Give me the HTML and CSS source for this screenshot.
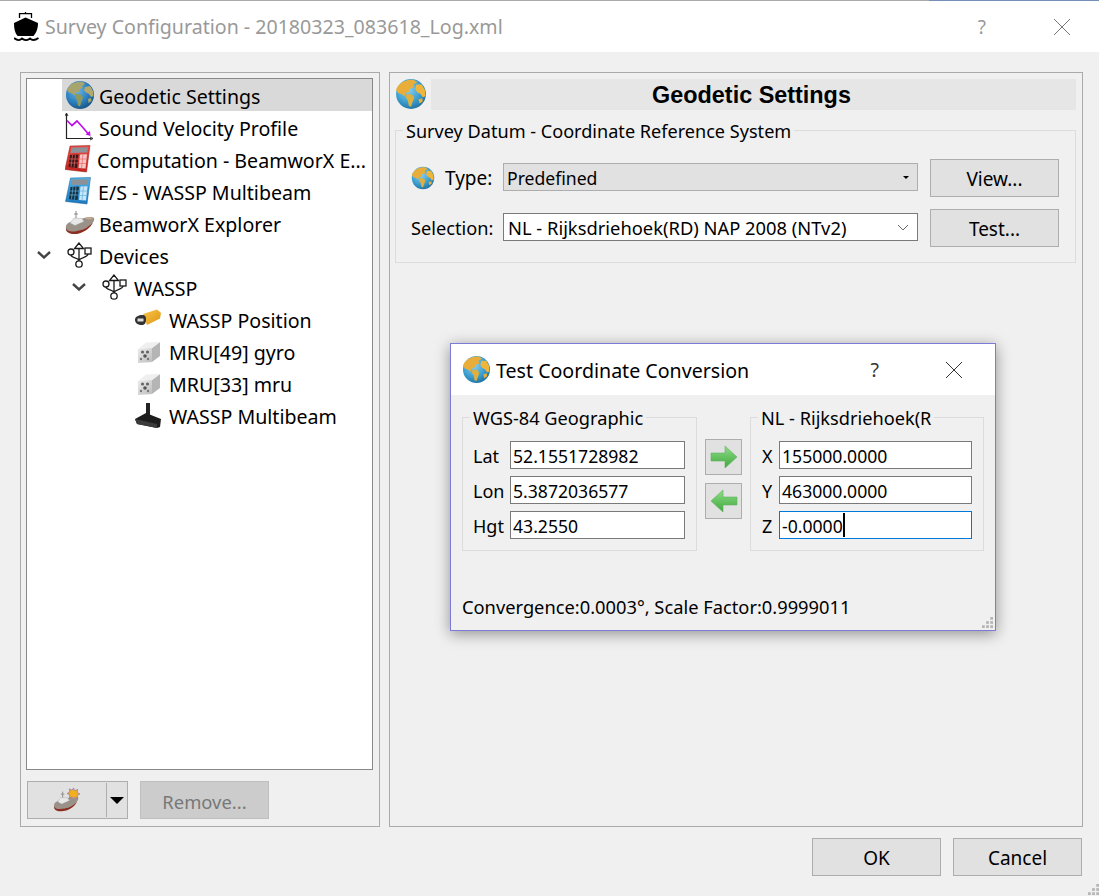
FILE: index.html
```html
<!DOCTYPE html>
<html lang="en">
<head>
<meta charset="utf-8">
<title>Survey Configuration</title>
<link rel="stylesheet" href="styles.css">
</head>
<body>
<svg class="defs" width="0" height="0" aria-hidden="true">
  <defs>
    <radialGradient id="sea" cx="40%" cy="35%" r="70%"><stop offset="0" stop-color="#6fb4e6"/><stop offset=".6" stop-color="#2b7fc0"/><stop offset="1" stop-color="#17527f"/></radialGradient>
    <radialGradient id="seaB" cx="40%" cy="35%" r="70%"><stop offset="0" stop-color="#8fd0ee"/><stop offset=".6" stop-color="#3d9fd0"/><stop offset="1" stop-color="#1d6f9f"/></radialGradient>
    <linearGradient id="red" x1="0" y1="0" x2="0" y2="1"><stop offset="0" stop-color="#f04a45"/><stop offset="1" stop-color="#c4221e"/></linearGradient>
    <linearGradient id="blue" x1="0" y1="0" x2="0" y2="1"><stop offset="0" stop-color="#4fb4ec"/><stop offset="1" stop-color="#1c78bd"/></linearGradient>
    <linearGradient id="gold" x1="0" y1="0" x2="1" y2="1"><stop offset="0" stop-color="#fbc64a"/><stop offset="1" stop-color="#dd9410"/></linearGradient>
    <linearGradient id="arrow" x1="0" y1="0" x2="0" y2="1"><stop offset="0" stop-color="#8fdc86"/><stop offset="1" stop-color="#3fa83f"/></linearGradient>
    <linearGradient id="metal" x1="0" y1="0" x2="1" y2="1"><stop offset="0" stop-color="#ececec"/><stop offset="1" stop-color="#bdbdbd"/></linearGradient>

    <symbol id="i-globe" viewBox="0 0 30 30">
      <circle cx="15" cy="15" r="14" fill="url(#sea)"/>
      <path d="M8 3.500c3-1.500 7-2.200 10-1.500l2 2-3 2 1 2-3 1-1 3-3 .5-1 3-3-2-3-1-2-2c1-3 3-6 6-7.500z" fill="#a7a56d"/>
      <path d="M11 14l5 .5 2 3-1.500 4-1.500 5-2-1-1-5-2-3z" fill="#8c9a5e"/>
      <path d="M20 7l5-1 3 5 .5 5-2.500 1-2-3-3-1.500-2-2z" fill="#b3a96d"/>
      <path d="M23 19l3-1 .5 3-3 2z" fill="#a7a56d"/>
    </symbol>
    <symbol id="i-globe-y" viewBox="0 0 30 30">
      <circle cx="15" cy="15" r="14" fill="url(#seaB)"/>
      <path d="M7 4c3-2 8-3 11-2l3 2-4 2 1 3-4 1-1 3-3 1-1 3-3-2-3-1-2-3c1-3 3-5 6-7z" fill="#e9ae3a"/>
      <path d="M11 15l5 .5 2 3-1.500 4-1.500 4.500-2-1-1-5-2-3z" fill="#ddb040"/>
      <path d="M20 6l5 0 3 5 .5 6-2.500 1-2-3-3-1.500-2-3z" fill="#eeb53c"/>
      <path d="M22 20l3.500-1 .5 3-3 2z" fill="#e9ae3a"/>
    </symbol>
    <symbol id="i-sv" viewBox="0 0 30 30">
      <path d="M1.500 2v24.500h25" fill="none" stroke="#222" stroke-width="1.200"/>
      <path d="M0 4l1.500-3 1.500 3M25 25l3 1.500-3 1.500" fill="none" stroke="#222" stroke-width=".9"/>
      <path d="M2 8.500l5 5 5-4.500 5 5.500 6 7" fill="none" stroke="#c010e8" stroke-width="1.700"/>
      <path d="M20.500 22.500l4.500-3.500 .5 5z" fill="#c010e8"/>
    </symbol>
    <symbol id="i-calc-r" viewBox="0 0 28 30">
      <path d="M5 2l20-.5-3.500 26.500L0 25.500z" fill="url(#red)" stroke="#8f1a18" stroke-width=".5"/>
      <path d="M6.500 3.500l16.500-.3-.8 5.300L5.500 9z" fill="#8d9298"/>
      <path d="M5 11l8.500-.5-1.500 13.500-8.500-1z" fill="#3a1817"/>
      <path d="M15 10.500l7-.3-1.500 14.300-7-.5z" fill="#f3c8c6"/>
      <path d="M4.500 15h9M4 19h9M7.500 11l-1.500 12M10.500 11l-1.500 12.500M14.500 15h7M14 19.500h7M18 10.500l-1.500 14" stroke="#e66" stroke-width=".7"/>
    </symbol>
    <symbol id="i-calc-b" viewBox="0 0 28 30">
      <path d="M5 2l20-.5-3.500 26.500L0 25.500z" fill="url(#blue)" stroke="#135f96" stroke-width=".5"/>
      <path d="M6.500 3.500l16.500-.3-.8 5.300L5.500 9z" fill="#8d9298"/>
      <path d="M5 11l8.500-.5-1.500 13.500-8.500-1z" fill="#16303f"/>
      <path d="M15 10.500l7-.3-1.500 14.300-7-.5z" fill="#c9e6f6"/>
      <path d="M4.500 15h9M4 19h9M7.500 11l-1.500 12M10.500 11l-1.500 12.500M14.500 15h7M14 19.500h7M18 10.500l-1.500 14" stroke="#5cb4e6" stroke-width=".7"/>
    </symbol>
    <symbol id="i-ship" viewBox="0 0 30 26">
      <path d="M11 1v9M9 4h4" stroke="#888" stroke-width="1"/>
      <path d="M1 16c1-4 9-6 15-7 5-2 11-3 13-1 1 3-2 6-6 9-5 3-11 5-16 5-4 0-7-2-6-6z" fill="#9a9288"/>
      <path d="M1 18c1 4 8 4 13 2.500 5-1 10-4 14-8-3 6-8 9-14 11-6 1.500-14 0-13-5.500z" fill="#8c2f22"/>
      <path d="M5 13l4-5 8 .5 2 3-9 4z" fill="#e8e8e8" stroke="#999" stroke-width=".4"/>
      <path d="M20 8c3-1 6-1 8 0-2 2-5 2-8 0z" fill="#c9a98d"/>
    </symbol>
    <symbol id="i-usb" viewBox="0 0 30 30">
      <g fill="none" stroke="#1a1a1a" stroke-width="1.300">
        <path d="M14 3l-4.500 5.500h9zM14 8.500v12.500M6 15c0 3 5 2 8 5M23 14c0 3-6 3-9 6"/>
        <circle cx="6" cy="12" r="3"/>
        <rect x="20" y="8" width="6" height="6"/>
        <circle cx="14" cy="24" r="3.200"/>
      </g>
    </symbol>
    <symbol id="i-chev" viewBox="0 0 14 8">
      <path d="M1 1l6 5.500 6-5.500" fill="none" stroke="#444" stroke-width="2.400"/>
    </symbol>
    <symbol id="i-gps" viewBox="0 0 30 30">
      <path d="M8 10l14-4.500 4 3.500-1 5.500L12 21z" fill="url(#gold)"/>
      <path d="M0 15.500c0-3 4-4.500 7-4.500 3.500 0 4 2 4 4.500 0 3-1 5.500-4 5.500-4 0-7-1.500-7-5.500z" fill="#333"/>
      <path d="M2.500 14.500h6v3h-6z" fill="#dcdcdc"/>
    </symbol>
    <symbol id="i-mru" viewBox="0 0 30 30">
      <path d="M17 12l8-6v14l-8 6z" fill="#b5b5b5"/>
      <path d="M3 13l8-6.500 14-.5-8 6z" fill="#efefef"/>
      <path d="M3 13l14-1v14l-14 1z" fill="url(#metal)"/>
      <circle cx="7.500" cy="16" r="1.600" fill="#666"/><circle cx="12.500" cy="16" r="1.600" fill="#666"/><circle cx="10" cy="20" r="1.800" fill="#555"/><circle cx="6" cy="23" r="1.200" fill="#777"/><circle cx="13" cy="23" r="1.200" fill="#777"/>
    </symbol>
    <symbol id="i-beam" viewBox="0 0 30 30">
      <path d="M11 3h4v12h-4z" fill="#222"/>
      <path d="M0 19l11-6 15 6-1 8-3 1L2 24z" fill="#1d1d1d"/>
      <path d="M0 19l22 5v4L2 24z" fill="#3b3b3b"/>
    </symbol>
    <symbol id="i-grip" viewBox="0 0 12 12">
      <g fill="#b5b5b5"><rect x="9" y="0" width="3" height="3"/><rect x="4.500" y="4.500" width="3" height="3"/><rect x="9" y="4.500" width="3" height="3"/><rect x="0" y="9" width="3" height="3"/><rect x="4.500" y="9" width="3" height="3"/><rect x="9" y="9" width="3" height="3"/></g>
    </symbol>
  </defs>
</svg>

<div class="window">
  <header class="titlebar">
    <svg class="title-icon" viewBox="0 0 25 29" width="25" height="29">
      <path d="M5.500 6V1.700h12V6M11.500 0v2" fill="none" stroke="#000" stroke-width="1.300"/>
      <path d="M11.500 5.500L24 11c0 6-2 10-4.500 13h-16C1 21 0 17 0 11z" fill="#000"/>
      <path d="M0 26c3 2.500 6 2.500 8 .5 2.500 2 5.500 2 8 0 2 2 5 2 8.500-.5" fill="none" stroke="#000" stroke-width="1.800"/>
    </svg>
    <span class="title-text">Survey Configuration - 20180323_083618_Log.xml</span>
    <span class="title-help">?</span>
    <svg class="title-close" viewBox="0 0 16 16" width="16" height="16"><path d="M0 0l16 16M16 0L0 16" stroke="#777" stroke-width="1" fill="none"/></svg>
  </header>

  <main class="content">
    <section class="left-panel">
      <div class="tree">
        <div class="row"><span class="twig"></span><div class="item selected"><svg class="ic w30"><use href="#i-globe"/></svg><span>Geodetic Settings</span></div></div>
        <div class="row"><span class="twig"></span><div class="item"><svg class="ic w30"><use href="#i-sv"/></svg><span>Sound Velocity Profile</span></div></div>
        <div class="row"><span class="twig"></span><div class="item"><svg class="ic w28"><use href="#i-calc-r"/></svg><span>Computation - BeamworX E...</span></div></div>
        <div class="row"><span class="twig"></span><div class="item"><svg class="ic w29"><use href="#i-calc-b"/></svg><span>E/S - WASSP Multibeam</span></div></div>
        <div class="row"><span class="twig"></span><div class="item"><svg class="ic w30"><use href="#i-ship"/></svg><span>BeamworX Explorer</span></div></div>
        <div class="row"><span class="twig"><svg class="chev"><use href="#i-chev"/></svg></span><div class="item"><svg class="ic w30"><use href="#i-usb"/></svg><span>Devices</span></div></div>
        <div class="row lvl1"><span class="twig"><svg class="chev"><use href="#i-chev"/></svg></span><div class="item"><svg class="ic w30"><use href="#i-usb"/></svg><span>WASSP</span></div></div>
        <div class="row lvl2"><span class="twig"></span><div class="item"><svg class="ic w30"><use href="#i-gps"/></svg><span>WASSP Position</span></div></div>
        <div class="row lvl2"><span class="twig"></span><div class="item"><svg class="ic w30"><use href="#i-mru"/></svg><span>MRU[49] gyro</span></div></div>
        <div class="row lvl2"><span class="twig"></span><div class="item"><svg class="ic w30"><use href="#i-mru"/></svg><span>MRU[33] mru</span></div></div>
        <div class="row lvl2"><span class="twig"></span><div class="item"><svg class="ic w30"><use href="#i-beam"/></svg><span>WASSP Multibeam</span></div></div>
      </div>
      <div class="tree-actions">
        <div class="split">
          <button class="split-main" type="button" aria-label="Add">
            <svg class="add-ship" viewBox="0 0 30 28" width="28" height="26"><use href="#i-ship" width="28" height="24" y="4"/>
              <path d="M22 1l1.500 3 3-1.500-.5 3.500 3 1.500-3 1.500.5 3.500-3-1.500L22 13l-1.500-2.500-3 1.500.5-3.500-3-1.500 3-1.500-.5-3.500 3 1.500z" fill="#f2b01e" stroke="#8f6fb0" stroke-width=".7"/>
            </svg>
          </button>
          <button class="split-arrow" type="button" aria-label="More"><i class="caret"></i></button>
        </div>
        <button class="btn btn-disabled" type="button" disabled>Remove...</button>
      </div>
    </section>

    <section class="right-panel">
      <div class="panel-head">
        <svg class="head-globe"><use href="#i-globe-y"/></svg>
        <h1 class="head-bar">Geodetic Settings</h1>
      </div>
      <fieldset class="group datum">
        <legend>Survey Datum - Coordinate Reference System</legend>
        <div class="form-row">
          <svg class="type-globe"><use href="#i-globe-y"/></svg>
          <label class="lbl-type">Type:</label>
          <div class="combo combo-flat"><span class="val-type">Predefined</span><i class="caret small"></i></div>
          <button class="btn btn-side" type="button">View...</button>
        </div>
        <div class="form-row">
          <label class="lbl-sel">Selection:</label>
          <div class="combo combo-edit"><span class="val-sel">NL - Rijksdriehoek(RD) NAP 2008 (NTv2)</span>
            <svg class="combo-chev" viewBox="0 0 12 7" width="12" height="7"><path d="M1 1l5 5 5-5" fill="none" stroke="#666" stroke-width="1"/></svg>
          </div>
          <button class="btn btn-side" type="button">Test...</button>
        </div>
      </fieldset>
    </section>
  </main>

  <footer class="footer">
    <button class="btn" type="button">OK</button>
    <button class="btn" type="button">Cancel</button>
  </footer>
  <svg class="grip grip-main"><use href="#i-grip"/></svg>

  <div class="dialog">
    <div class="dlg-title">
      <svg class="dlg-globe"><use href="#i-globe-y"/></svg>
      <span class="dlg-name">Test Coordinate Conversion</span>
      <span class="dlg-help">?</span>
      <svg class="dlg-close" viewBox="0 0 16 16" width="16" height="16"><path d="M0 0l16 16M16 0L0 16" stroke="#333" stroke-width="1" fill="none"/></svg>
    </div>
    <div class="dlg-body">
      <div class="dlg-groups">
        <fieldset class="group coord coord-left">
          <legend>WGS-84 Geographic</legend>
          <div class="field"><label>Lat</label><div class="input">52.1551728982</div></div>
          <div class="field"><label>Lon</label><div class="input">5.3872036577</div></div>
          <div class="field"><label>Hgt</label><div class="input">43.2550</div></div>
        </fieldset>
        <div class="arrows">
          <button class="arrow-btn" type="button" aria-label="Convert right"><svg viewBox="0 0 28 24" width="28" height="24"><path d="M1 8h14V1l12 11-12 11v-7H1z" fill="url(#arrow)" stroke="#5fb35f" stroke-width=".6"/></svg></button>
          <button class="arrow-btn" type="button" aria-label="Convert left"><svg viewBox="0 0 28 24" width="28" height="24"><path d="M27 8H13V1L1 12l12 11v-7h14z" fill="url(#arrow)" stroke="#5fb35f" stroke-width=".6"/></svg></button>
        </div>
        <fieldset class="group coord coord-right">
          <legend>NL - Rijksdriehoek(R</legend>
          <div class="field"><label>X</label><div class="input">155000.0000</div></div>
          <div class="field"><label>Y</label><div class="input">463000.0000</div></div>
          <div class="field"><label>Z</label><div class="input focus">-0.0000<i class="cursor"></i></div></div>
        </fieldset>
      </div>
      <p class="status">Convergence:0.0003°, Scale Factor:0.9999011</p>
    </div>
    <svg class="grip grip-dlg"><use href="#i-grip"/></svg>
  </div>
</div>
</body>
</html>
```
FILE: styles.css
```css
* { box-sizing: border-box; }
html, body { margin: 0; padding: 0; }
body { font-family: "Noto Sans", "Open Sans", sans-serif; font-size: 19px; color: #000; background: #f0f0f0; }
.defs { position: absolute; }
.window { position: relative; width: 1099px; height: 896px; overflow: hidden; background: #f0f0f0; }
button { font: inherit; color: inherit; }

.titlebar { display: flex; align-items: center; height: 52px; background: #fff; border-top: 1px solid #aaa; border-image: linear-gradient(to right, #aaa 928px, #7490b8 928px) 1; padding: 0 29px 0 14px; }
.title-icon { flex: none; margin-right: 6px; }
.title-text { flex: 1; font-size: 19.6px; color: #999; }
.title-help { color: #999; margin-right: 68px; }
.title-close { flex: none; }

.content { display: flex; gap: 9px; padding: 20px 16px 0 20px; }
.left-panel { width: 360px; height: 755px; border: 1px solid #aaa; padding: 5px 6px 6px 5px; display: flex; flex-direction: column; }
.tree { height: 692px; background: #fff; border: 1px solid #888; overflow: hidden; font-size: 19.6px; }
.row { display: flex; height: 32px; }
.lvl1 { padding-left: 35px; }
.lvl2 { padding-left: 70px; }
.twig { flex: none; width: 35px; display: flex; align-items: center; padding-left: 10px; }
.item { flex: 1; min-width: 0; display: flex; align-items: center; gap: 4px; padding-left: 3px; white-space: nowrap; overflow: hidden; }
.item span { padding-top: 3px; }
.selected { background: #d9d9d9; }
.ic { flex: none; height: 30px; }
.w30 { width: 30px; }
.w29 { width: 29px; }
.w28 { width: 28px; }
.chev { width: 14px; height: 8px; }

.tree-actions { display: flex; gap: 12px; margin-top: 11px; padding-left: 1px; }
.split { display: flex; width: 101px; height: 38px; background: #e1e1e1; border: 1px solid #adadad; }
.split-main { flex: none; width: 78px; border: 0; background: none; display: flex; align-items: center; justify-content: center; padding: 0; }
.split-arrow { flex: 1; border: 0; border-left: 1px solid #adadad; margin: 1px 0; background: none; display: flex; align-items: center; justify-content: center; padding: 0; }
.caret { display: block; border-left: 7px solid transparent; border-right: 7px solid transparent; border-top: 7px solid #000; }
.caret.small { border-left-width: 3px; border-right-width: 3px; border-top-width: 3px; }

.btn { flex: none; width: 129px; height: 38px; background: #e1e1e1; border: 1px solid #adadad; padding: 2px 0 0; }
.btn-disabled { background: #ccc; border-color: #bfbfbf; color: #787878; font-size: 18.4px; }

.right-panel { width: 694px; height: 755px; border: 1px solid #aaa; padding: 5px 6px 0 5px; }
.panel-head { display: flex; align-items: center; gap: 4px; }
.head-globe { flex: none; width: 32px; height: 32px; }
.head-bar { flex: 1; height: 31px; margin: 0; padding-right: 4px; background: #e6e6e6; font: bold 23.4px/33px "Liberation Sans", sans-serif; text-align: center; }

.group { margin: 0; border: 1px solid #dcdcdc; min-width: 0; }
.group legend { position: relative; top: 1px; padding: 0 3px; line-height: 26px; font-size: 18.2px; }
.datum { height: 146px; margin: 7px 0 0 0; padding: 16px 16px 0 15px; }
.datum legend { margin-left: -8px; font-size: 18.1px; }
.form-row { display: flex; align-items: center; height: 38px; margin-bottom: 12px; }
.type-globe { flex: none; width: 24px; height: 26px; margin-right: 10px; }
.lbl-type { width: 58px; flex: none; }
.lbl-sel { width: 92px; flex: none; font-size: 18.2px; }
.combo { flex: none; width: 415px; height: 28px; margin-bottom: 2px; display: flex; align-items: center; justify-content: space-between; padding: 0 8px 0 3px; }
.combo-flat { background: #e1e1e1; border: 1px solid #adadad; }
.combo-edit { background: #fff; border: 1px solid #7a7a7a; padding-left: 4px; }
.val-type { font-size: 17.6px; padding-top: 1px; }
.val-sel { font-size: 18.35px; padding-top: 1px; }
.btn-side { margin-left: 12px; }

.dialog { position: absolute; left: 450px; top: 343px; width: 546px; height: 288px; background: #f0f0f0; border: 1px solid #7c7cd8; box-shadow: 0 3px 14px rgba(0,0,0,.4); }
.dlg-title { display: flex; align-items: center; height: 51px; background: #fff; padding: 0 33px 0 11px; font-size: 19.6px; }
.dlg-globe { flex: none; width: 29px; height: 29px; margin-right: 5px; }
.dlg-name { flex: 1; padding-top: 2px; }
.dlg-help { margin-right: 67px; color: #333; }
.dlg-close { flex: none; }
.dlg-body { padding: 9px 11px 0 11px; }
.dlg-groups { display: flex; align-items: flex-start; }
.coord { padding: 11px 11px 0 10px; height: 147px; }
.coord legend { margin-left: -3px; }
.coord-left { width: 235px; }
.coord-right { width: 234px; }
.arrows { flex: none; width: 53px; display: flex; flex-direction: column; align-items: center; gap: 8px; padding-top: 35px; }
.arrow-btn { width: 37px; height: 36px; background: #e1e1e1; border: 1px solid #adadad; padding: 0; display: flex; align-items: center; justify-content: center; }
.field { display: flex; align-items: center; height: 28px; margin-bottom: 7px; }
.field label { flex: 1; font-size: 18px; padding-top: 2px; }
.coord-right .field label { padding-left: 1px; }
.input { flex: none; height: 28px; background: #fff; border: 1px solid #7a7a7a; padding: 2px 0 0 2px; display: flex; align-items: center; font-size: 17.6px; }
.coord-left .input { width: 175px; }
.coord-right .input { width: 193px; }
.focus { border-color: #0078d7; }
.cursor { display: block; width: 2px; height: 24px; background: #000; margin-top: -2px; }
.status { margin: 43px 0 0; line-height: 26px; white-space: nowrap; font-size: 18.3px; }

.footer { display: flex; justify-content: flex-end; gap: 12px; padding: 11px 17px 0 0; }
.grip { position: absolute; width: 11px; height: 11px; }
.grip-main { right: 0; bottom: 1px; }
.grip-dlg { right: 2px; bottom: 2px; }
```
